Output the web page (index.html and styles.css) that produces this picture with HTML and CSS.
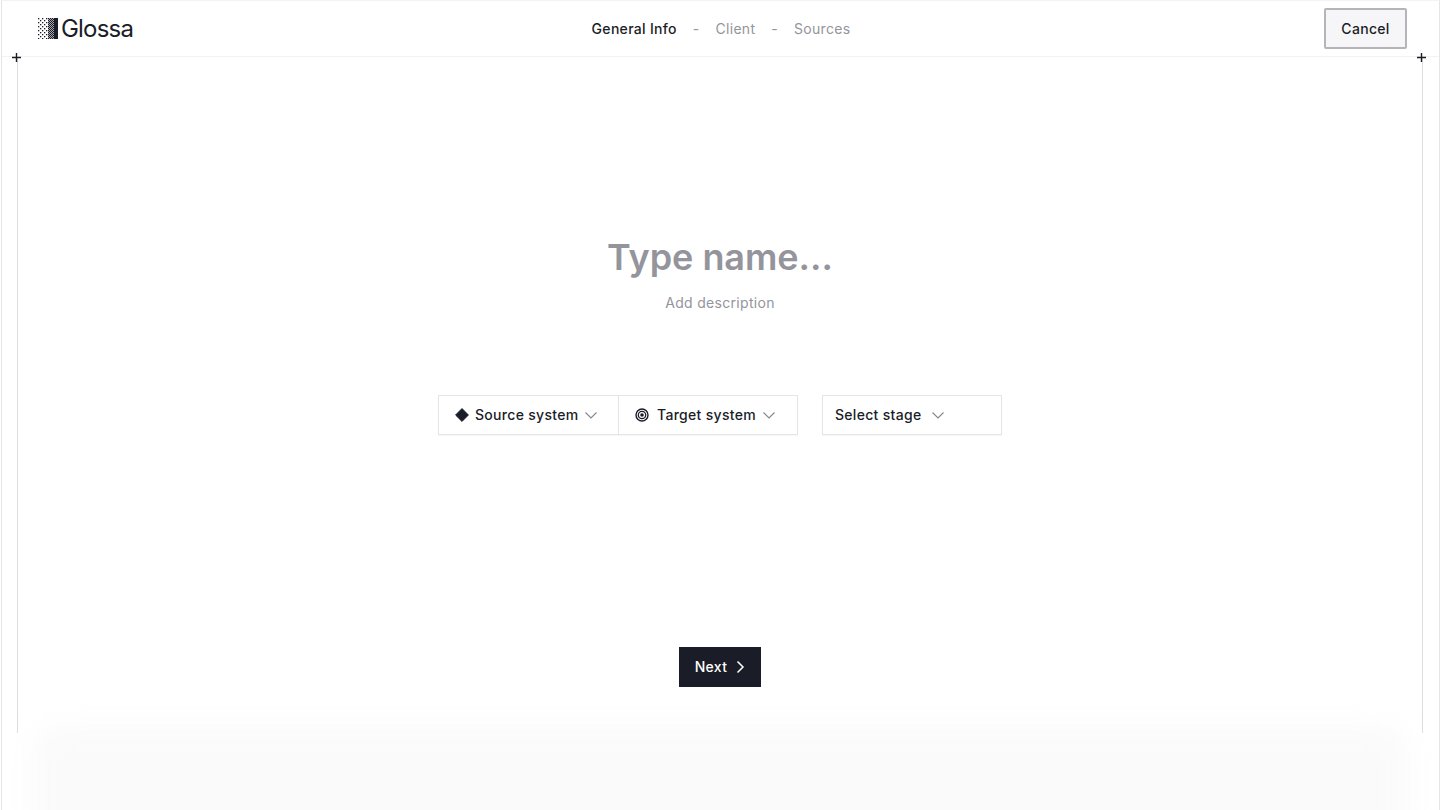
FILE: index.html
```html
<!DOCTYPE html>
<html lang="en">
<head>
  <meta charset="UTF-8" />
  <meta name="viewport" content="width=device-width, initial-scale=1.0" />
  <title>Glossa - New project</title>
  <link rel="stylesheet" href="styles.css">
</head>
<body>
  <div class="page">
    <!-- Top bar -->
    <header class="topbar">
      <a class="logo" href="#">
        <svg class="logo-mark" width="20" height="21" viewBox="0 0 20 21">
          <defs>
            <pattern id="ditherSparse" width="4" height="4" patternUnits="userSpaceOnUse">
              <rect x="0" y="0" width="1.3" height="1.3" fill="#1a1d27" />
              <rect x="2" y="2" width="1.3" height="1.3" fill="#1a1d27" />
            </pattern>
            <pattern id="ditherDense" width="2" height="2" patternUnits="userSpaceOnUse">
              <rect x="0" y="0" width="1.4" height="1.4" fill="#1a1d27" />
              <rect x="1" y="1" width="1" height="1" fill="#1a1d27" />
            </pattern>
          </defs>
          <rect x="0" y="0" width="10" height="21" fill="url(#ditherSparse)" />
          <rect x="10" y="0" width="6" height="21" fill="url(#ditherDense)" />
          <rect x="16" y="0" width="4" height="21" fill="#1a1d27" />
        </svg>
        <span class="logo-text">Glossa</span>
      </a>
      <nav class="steps">
        <span class="step active">General Info</span>
        <span class="step-sep">-</span>
        <span class="step">Client</span>
        <span class="step-sep">-</span>
        <span class="step">Sources</span>
      </nav>
      <div class="topbar-right">
        <button class="cancel-btn">Cancel</button>
      </div>
    </header>

    <!-- Framed canvas -->
    <main class="canvas">
      <svg class="cross cross-left" width="11" height="11" viewBox="0 0 11 11"><path d="M5.5 1v9M1 5.5h9" /></svg>
      <svg class="cross cross-right" width="11" height="11" viewBox="0 0 11 11"><path d="M5.5 1v9M1 5.5h9" /></svg>

      <h1 class="name">Type name...</h1>
      <p class="description">Add description</p>

      <div class="selectors">
        <div class="select-group">
          <button class="select select-source">
            <svg width="14" height="14" viewBox="0 0 14 14"><path d="M7 .6 13.4 7 7 13.4.6 7Z" fill="#1a1d27" stroke="#1a1d27" stroke-linejoin="round" /></svg>
            <span>Source system</span>
            <svg class="chevron" width="14" height="14" viewBox="0 0 14 14"><path d="M1.5 4.5 7 10l5.5-5.5" /></svg>
          </button>
          <button class="select select-target">
            <svg width="14" height="14" viewBox="0 0 14 14" fill="none" stroke="#1a1d27"><circle cx="7" cy="7" r="6" stroke-width="1.4" /><circle cx="7" cy="7" r="3.7" stroke-width="1.3" /><circle cx="7" cy="7" r="1.8" fill="#1a1d27" stroke="none" /></svg>
            <span>Target system</span>
            <svg class="chevron" width="14" height="14" viewBox="0 0 14 14"><path d="M1.5 4.5 7 10l5.5-5.5" /></svg>
          </button>
        </div>
        <button class="select select-stage">
          <span>Select stage</span>
          <svg class="chevron" width="14" height="14" viewBox="0 0 14 14"><path d="M1.5 4.5 7 10l5.5-5.5" /></svg>
        </button>
      </div>

      <button class="next-btn">
        <span>Next</span>
        <svg width="10" height="14" viewBox="0 0 10 14"><path d="M2.5 1.5 8 7l-5.5 5.5" /></svg>
      </button>
    </main>

    <div class="fade"></div>
  </div>
</body>
</html>
```

FILE: styles.css
```css
/* Base styling */
* { box-sizing: border-box; }
html, body {
  margin: 0;
  height: 810px;
  overflow: hidden;
}
body {
  font-family: Inter, "Noto Sans", sans-serif;
  background: #fff;
  color: #1a1d27;
  font-size: 14px;
  letter-spacing: 0.3px;
}
button {
  font-family: inherit;
  font-size: 14px;
  letter-spacing: inherit;
  cursor: pointer;
}
.page {
  position: relative;
  height: 810px;
  border-left: 1px solid #e4e4e9;
  border-right: 1px solid #e4e4e9;
  border-top: 1px solid #f3f3f5;
  margin-left: 1px;
  overflow: hidden;
}

/* Top bar */
.topbar {
  display: grid;
  grid-template-columns: 1fr auto 1fr;
  align-items: center;
  height: 56px;
  padding: 0 32px 0 36px;
  border-bottom: 1px solid #f2f2f3;
}
.logo {
  display: flex;
  align-items: center;
  gap: 3px;
  color: #1a1d27;
  text-decoration: none;
}
.logo-text {
  font-size: 24px;
  letter-spacing: -0.8px;
  line-height: 28px;
}
.steps {
  display: flex;
  gap: 16px;
  margin-right: 3px;
  color: #94949c;
}
.step.active {
  color: #1a1d27;
  font-weight: 450;
}
.topbar-right {
  display: flex;
  justify-content: flex-end;
}
.cancel-btn {
  width: 83px;
  height: 41px;
  margin-top: -1px;
  background: #f6f6f8;
  border: 2px solid #b4b4ba;
  border-radius: 2px;
  color: #1a1d27;
  font-weight: 450;
}

/* Framed canvas */
.canvas {
  position: relative;
  display: flex;
  flex-direction: column;
  align-items: center;
  height: 676px;
  margin: 0 16px 0 15px;
  border-left: 1px solid #dedee2;
  border-right: 1px solid #dedee2;
  padding-top: 176px;
}
.cross {
  position: absolute;
  top: -5px;
  fill: none;
  stroke: #1a1d27;
  stroke-width: 1.4;
}
.cross-left { left: -7px; }
.cross-right { right: -5px; }
.name {
  margin: 0;
  font-size: 36px;
  line-height: 48px;
  font-weight: 600;
  letter-spacing: -0.05px;
  color: #94949c;
}
.description {
  margin: 12px 0 0;
  line-height: 20px;
  color: #94949c;
}
.selectors {
  display: flex;
  gap: 24px;
  margin-top: 82px;
}
.select-group { display: flex; }
.select {
  display: flex;
  align-items: center;
  gap: 6px;
  height: 40px;
  background: #fff;
  border: 1px solid #e4e4e9;
  color: #1a1d27;
  font-weight: 450;
  padding: 0 0 1px;
  box-shadow: 0 1px 1px rgba(0, 0, 0, 0.03);
}
.select-source {
  width: 181px;
  padding-left: 16px;
}
.select-target {
  width: 180px;
  margin-left: -1px;
  padding-left: 16px;
}
.select-target svg:first-child { margin-right: 2px; }
.select-stage {
  width: 180px;
  padding-left: 12px;
  gap: 10px;
}
.chevron {
  fill: none;
  stroke: #85858d;
  stroke-width: 1.1;
}
.next-btn {
  display: flex;
  align-items: center;
  gap: 8px;
  height: 40px;
  margin-top: 212px;
  padding: 0 16px 1px;
  background: #1a1d27;
  border: none;
  color: #fff;
  font-weight: 450;
}
.next-btn svg {
  fill: none;
  stroke: #fff;
  stroke-width: 1.5;
}

/* Soft fade at the bottom */
.fade {
  position: absolute;
  left: 32px;
  right: 32px;
  top: 726px;
  height: 120px;
  background: #fafafa;
  border-radius: 24px;
  filter: blur(14px);
}
```
